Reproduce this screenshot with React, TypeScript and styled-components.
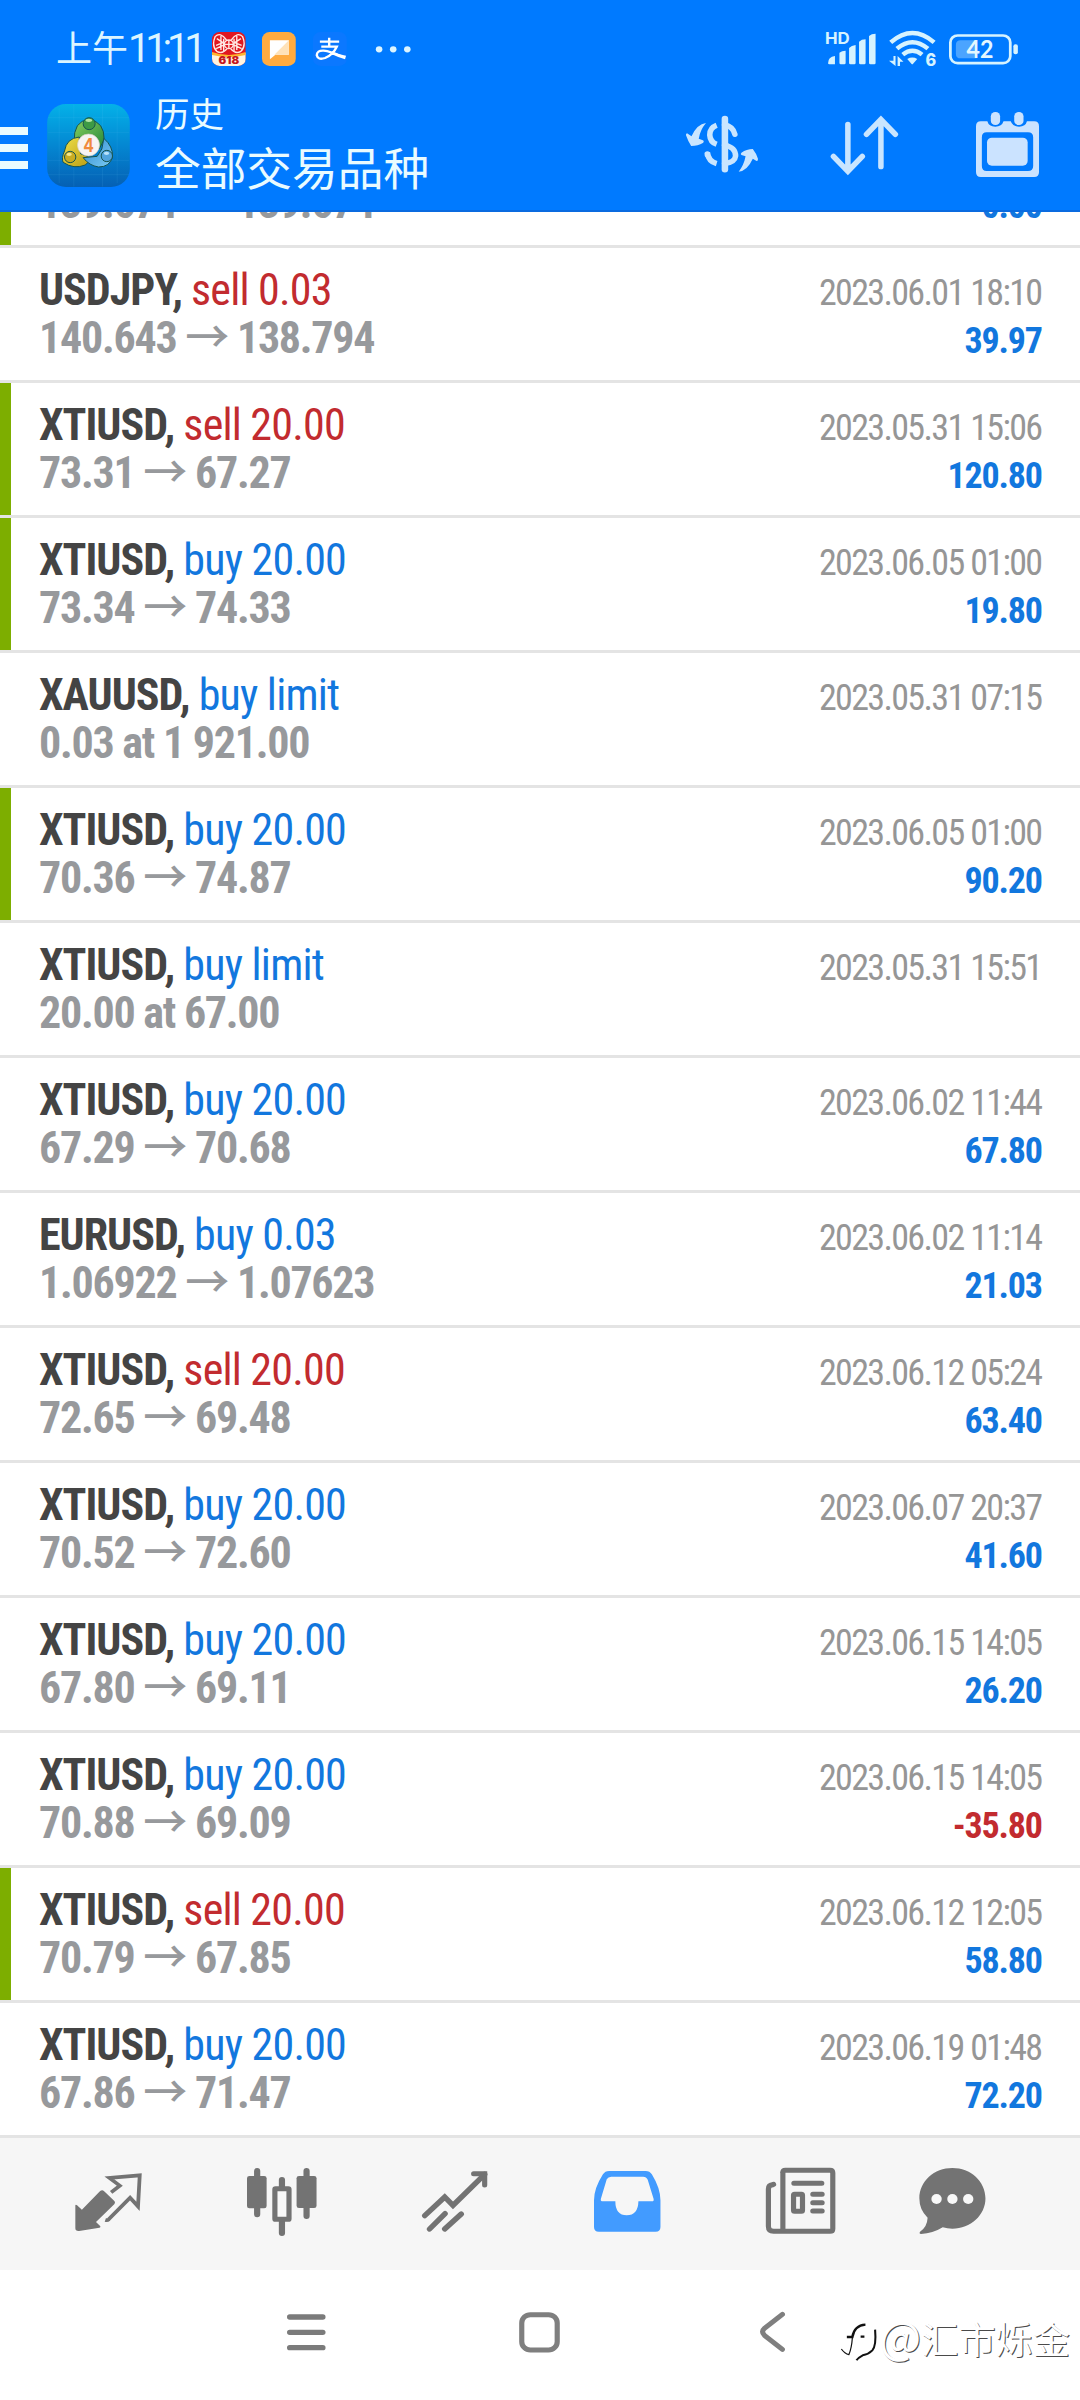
import React from "react";
import styled, { createGlobalStyle } from "styled-components";

const GlobalStyle = createGlobalStyle`
  * { box-sizing: border-box; }
  body { margin: 0; background: #fff; }
`;

const BLUE = "#1277de";
const RED = "#c22b2f";
const PALE = "#c9e5ff";
const GREY = "#737373";

const Screen = styled.div`
  width: 1080px;
  height: 2400px;
  display: flex;
  flex-direction: column;
  background: #fff;
  overflow: hidden;
  font-family: "Roboto Condensed", Roboto, "Noto Sans CJK SC", sans-serif;
`;

const Header = styled.header`
  flex: none;
  height: 212px;
  background: #007aff;
  border-bottom: 2px solid #0a6be0;
  color: #e9fbff;
  display: flex;
  flex-direction: column;
`;

const StatusBar = styled.div`
  height: 96px;
  padding: 2px 62px 0 56px;
  display: flex;
  align-items: center;
  justify-content: space-between;
`;

const StatusGroup = styled.div<{ $gap: number }>`
  display: flex;
  align-items: center;
  gap: ${(p) => p.$gap}px;
`;

const Clock = styled.span`
  width: 142px;
  margin-right: -2px;
  font: 400 36px/48px Roboto, "Noto Sans CJK SC", sans-serif;
  color: #dcf5ff;
  white-space: nowrap;
  display: flex;
  align-items: baseline;
`;

const ClockDigits = styled.span`
  font-size: 40px;
  letter-spacing: -5.2px;
  font-family: Roboto, sans-serif;
`;

const AppBar = styled.div`
  height: 114px;
  display: flex;
  align-items: flex-start;
`;

const Burger = styled.div`
  width: 28px;
  margin: 31px 19px 0 0;
  display: flex;
  flex-direction: column;
  gap: 9px;
`;

const BurgerLine = styled.i`
  height: 8px;
  background: #e9fbff;
`;

const LogoSlot = styled.div`
  margin-top: 8px;
  width: 83px;
  height: 83px;
`;

const Titles = styled.div`
  margin: -7px 0 0 25px;
  width: 400px;
  font-family: "Noto Sans CJK SC", sans-serif;
`;

const Subtitle = styled.div`
  font-size: 34.5px;
  line-height: 46px;
`;

const Title = styled.div`
  font-size: 45.7px;
  line-height: 62px;
`;

const Actions = styled.div`
  margin: 16px 41px 0 auto;
  display: flex;
  align-items: flex-start;
`;

const ActionSlot = styled.div<{ $left: number; $top: number }>`
  margin: ${(p) => p.$top}px 0 0 ${(p) => p.$left}px;
`;

const List = styled.main`
  flex: none;
  height: 1926px;
  display: flex;
  flex-direction: column;
  overflow: hidden;
`;

const Row = styled.div<{ $marked?: boolean }>`
  flex: none;
  height: 135px;
  display: flex;
  border-bottom: 3px solid #e4e4e4;
  background: linear-gradient(
    to right,
    ${(p) => (p.$marked ? "#7dae00" : "#fff")} 11px,
    #fff 11px
  );
  background-clip: padding-box;
`;

const ScrolledRow = styled(Row)`
  height: 36px;
  overflow: hidden;
`;

const RowBody = styled.div`
  flex: 1;
  padding: 18px 38px 0 39px;
`;

const ScrolledBody = styled.div`
  flex: 1;
  margin-top: -33px;
  padding: 0 38px 0 39px;
`;

const Line = styled.div`
  height: 48px;
  display: flex;
  justify-content: space-between;
  align-items: baseline;
  white-space: nowrap;
  line-height: 48px;
`;

const Deal = styled.span`
  font-size: 44px;
  letter-spacing: -1px;
`;

const Symbol = styled.b`
  color: #444;
  font-weight: 700;
`;

const Side = styled.span<{ $sell?: boolean }>`
  letter-spacing: -0.8px;
  color: ${(p) => (p.$sell ? RED : BLUE)};
`;

const Price = styled.span`
  font-size: 44px;
  font-weight: 700;
  letter-spacing: -1.26px;
  color: #97999c;
`;

const Arrow = styled.span`
  font-family: "Noto Sans", "Noto Sans CJK SC", sans-serif;
  font-weight: 500;
  line-height: 0;
`;

const DateText = styled.span`
  margin-right: 0.6px;
  font-size: 36px;
  letter-spacing: -1.65px;
  color: #969696;
`;

const Profit = styled.span<{ $loss?: boolean }>`
  margin-right: 0.2px;
  font-size: 36px;
  font-weight: 700;
  letter-spacing: -1.2px;
  color: ${(p) => (p.$loss ? RED : BLUE)};
`;

const Tabs = styled.nav`
  flex: none;
  height: 132px;
  background: #f6f6f6;
  padding-left: 22px;
  display: grid;
  grid-template-columns: repeat(5, 173px) 131px;
  align-items: start;
  justify-items: center;
`;

const TabSlot = styled.div<{ $top: number }>`
  margin-top: ${(p) => p.$top}px;
`;

const NavBar = styled.footer`
  position: relative;
  flex: 1;
  padding: 0 0 6px 287px;
  display: flex;
  align-items: center;
`;

const NavKey = styled.div<{ $gap: number }>`
  margin-left: ${(p) => p.$gap}px;
`;

const Watermark = styled.div`
  position: absolute;
  right: 10px;
  bottom: 37px;
  display: flex;
  align-items: center;
  gap: 2px;
  color: #fff;
  font: 400 37.2px/50px "Noto Sans CJK SC", sans-serif;
  text-shadow: 1px 1px 0 #4a4a4a;
  white-space: nowrap;
`;

const MarkSlot = styled.div`
  margin-top: 8px;
`;

const AtSign = styled.span`
  font-size: 44px;
  line-height: 0;
`;

const Svg = styled.svg`
  display: block;
  flex: none;
  overflow: visible;
`;

function Glyph({ box, children }: { box: [number, number, number, number]; children: React.ReactNode }) {
  return (
    <Svg viewBox={box.join(" ")} width={box[2] / 2.904} height={box[3] / 3} preserveAspectRatio="none">
      {children}
    </Svg>
  );
}

const PromoIcon = () => (
  <Glyph box={[616, 96, 98, 102]}>
    <defs>
      <clipPath id="promo"><rect x="616" y="96" width="98" height="102" rx="22" /></clipPath>
    </defs>
    <g clipPath="url(#promo)">
      <rect x="616" y="96" width="98" height="102" fill="#e01820" />
      <path d="M616 158Q665 176 714 158V198H616Z" fill="#fff4e0" />
      <path d="M616 156Q665 174 714 156V165Q665 178 616 165Z" fill="#ffb52e" />
      <g fill="none" stroke="#ffe9e4" strokeWidth="4">
        <path d="M658 120Q640 94 625 110Q614 138 630 154Q646 164 660 146M672 120Q690 94 705 110Q716 138 700 154Q684 164 670 146" />
        <path d="M630 116L648 128L628 136M642 108V150M650 116V154M700 116L682 128L702 136M688 108V150M680 116V154M628 146L648 136M702 146L682 136" />
        <circle cx="665" cy="133" r="13" />
        <path d="M665 120V146M652 133H678" />
      </g>
      <text x="665" y="192" textAnchor="middle" fontFamily="Inter, sans-serif" fontWeight="900" fontSize="32" textLength="60" lengthAdjust="spacingAndGlyphs" fill="#c5161d">618</text>
    </g>
  </Glyph>
);

const NoteIcon = () => (
  <Glyph box={[761, 96, 98, 102]}>
    <rect x="761" y="96" width="98" height="102" rx="22" fill="#ffab40" />
    <path d="M784 121H839V164H800L784 178Z" fill="#fff" />
    <path d="M839 121V164H797Z" fill="#ffe2b8" />
  </Glyph>
);

const PayIcon = () => (
  <Glyph box={[910, 96, 98, 102]}>
    <rect x="910" y="96" width="98" height="102" rx="22" fill="#0b78ff" />
    <g fill="none" stroke="#fff" strokeWidth="7">
      <path d="M930 125H986M957 113V140M934 140H979Q968 164 945 174Q924 181 921 166Q921 151 941 152Q960 154 990 168" />
    </g>
    <path d="M966 155Q988 164 1006 167L1003 178Q984 172 962 161Z" fill="#fff" />
  </Glyph>
);

const Dots = () => (
  <Glyph box={[1091, 137, 100, 20]}>
    {[1100, 1141, 1182].map((x) => <circle key={x} cx={x} cy="147" r="9.5" fill="#dcf5ff" />)}
  </Glyph>
);

const SignalIcon = () => (
  <Glyph box={[828, 98, 145, 104]}>
    <g fill="#d6f3ff">
      <text x="825" y="134" fontFamily="Inter, sans-serif" fontWeight="700" fontSize="48" textLength="72" lengthAdjust="spacingAndGlyphs">HD</text>
      <path d="M834 192Q834 172 854 170V195H838Q834 195 834 192ZM867 160Q874 154 885 154V191Q885 195 881 195H871Q867 195 867 191ZM895 146Q902 138 914 137V191Q914 195 910 195H899Q895 195 895 191ZM924 127Q931 120 943 120V191Q943 195 939 195H928Q924 195 924 191ZM953 110Q960 103 972 103V191Q972 195 968 195H957Q953 195 953 191Z" />
    </g>
  </Glyph>
);

const WifiIcon = () => (
  <Glyph box={[1009, 98, 136, 106]}>
    <g fill="none" stroke="#d6f3ff" strokeWidth="13">
      <path d="M1014 132Q1077 76 1140 132M1032 151Q1077 112 1122 151M1049 169Q1077 146 1105 169" />
    </g>
    <g fill="#d6f3ff">
      <path d="M1062 182Q1077 173 1091 182L1079 196Q1077 199 1074 196ZM1022 173H1028V203L1009 187H1022ZM1034 203V173L1051 190H1041V203Z" />
      <text x="1115" y="203" fontFamily="Inter, sans-serif" fontWeight="800" fontSize="51" textLength="31" lengthAdjust="spacingAndGlyphs">6</text>
    </g>
  </Glyph>
);

const BatteryIcon = () => (
  <Glyph box={[1188, 101, 200, 91]}>
    <rect x="1192" y="105.500" width="174" height="83" rx="21" fill="none" stroke="#d6f3ff" strokeWidth="8" />
    <path d="M1222 120H1268V174H1222Q1208 174 1208 160V134Q1208 120 1222 120Z" fill="#4ba4ff" />
    <rect x="1375" y="132" width="13" height="30" rx="6" fill="#d6f3ff" />
    <text x="1278" y="174" textAnchor="middle" fontFamily="Lato, sans-serif" fontWeight="700" fontSize="73" textLength="78" lengthAdjust="spacingAndGlyphs" fill="#e3f7ff">42</text>
  </Glyph>
);

const AppLogo = () => (
  <Svg viewBox="50 43 248 249" width="83" height="83">
    <defs>
      <linearGradient id="tile" x1="0" y1="0" x2="0" y2="1">
        <stop offset="0" stopColor="#04b1e8" />
        <stop offset="0.5" stopColor="#0487d2" />
        <stop offset="1" stopColor="#0560b4" />
      </linearGradient>
      <linearGradient id="green" x1="0" y1="0" x2="1" y2="1">
        <stop offset="0" stopColor="#8bd05f" /><stop offset="1" stopColor="#23873a" />
      </linearGradient>
      <linearGradient id="gold" x1="0" y1="0" x2="1" y2="1">
        <stop offset="0" stopColor="#efe04a" /><stop offset="1" stopColor="#b79a12" />
      </linearGradient>
      <linearGradient id="azure" x1="0" y1="0" x2="1" y2="1">
        <stop offset="0" stopColor="#2d86cd" /><stop offset="1" stopColor="#7ccdf5" />
      </linearGradient>
    </defs>
    <rect x="50" y="43" width="248" height="249" rx="56" fill="url(#tile)" />
    <path d="M86 56V280M130 44V291M216 44V291M260 56V280M52 84H296M52 128H296M52 212H296M52 255H296" stroke="#7fd4ff" strokeOpacity=".14" strokeWidth="2" />
    <g stroke="#17544f" strokeWidth="3">
      <path d="M131 158Q128 92 176 90Q222 96 221 150L206 178L176 140L142 144Z" fill="url(#green)" />
      <path d="M146 142Q108 146 102 184Q92 206 98 218Q130 240 164 226L186 206L150 192Z" fill="url(#gold)" />
      <path d="M220 146Q248 170 246 202Q238 232 204 232Q176 228 158 204L200 200L214 178Z" fill="url(#azure)" />
      <circle cx="176" cy="102" r="18" fill="#3d9a45" />
      <circle cx="119" cy="202" r="17" fill="#c9ac22" />
      <circle cx="229" cy="199" r="17" fill="#4fa3dd" />
    </g>
    <ellipse cx="175" cy="92" rx="10" ry="5" fill="#b8e6a4" />
    <ellipse cx="116" cy="194" rx="8" ry="5" fill="#f5e68c" />
    <ellipse cx="228" cy="191" rx="8" ry="5" fill="#b9e2fa" />
    <circle cx="174" cy="166" r="33" fill="#f8f4f2" stroke="#d6cfc4" strokeWidth="2" />
    <text x="174" y="186" textAnchor="middle" fontFamily="Inter, sans-serif" fontWeight="700" fontSize="55" textLength="32" lengthAdjust="spacingAndGlyphs" fill="#f08a3c">4</text>
  </Svg>
);

const CurrencyIcon = () => (
  <Glyph box={[424, 348, 210, 168]}>
    <g fill="none" stroke={PALE} strokeWidth="16">
      <path d="M513 376Q493 384 493 405Q494 426 513 433M486 457Q489 484 513 491" />
      <path d="M486 464V462M566 403Q561 380 536 374M536 435Q568 442 568 468Q566 487 536 491" strokeLinecap="round" />
      <path d="M537 357V508" strokeWidth="19" strokeLinecap="round" />
    </g>
    <path d="M482 369Q456 372 440 409L427 400Q423 401 424 406Q430 424 439 438Q459 438 473 429Q478 424 473 421L461 416Q465 390 482 369ZM577 515Q602 512 618 476L629 483Q634 483 633 476Q628 460 618 447Q600 447 585 458Q581 462 585 465L597 469Q592 496 577 515Z" fill={PALE} />
  </Glyph>
);

const SortIcon = () => (
  <Glyph box={[847, 348, 195, 177]}>
    <path d="M896 373V514M854 469L896 514L938 469M992 500V358M950 403L992 358L1034 403" fill="none" stroke={PALE} strokeWidth="16" strokeLinecap="round" strokeLinejoin="miter" />
  </Glyph>
);

const CalendarIcon = () => (
  <Glyph box={[1268, 338, 183, 196]}>
    <path fillRule="evenodd" fill="#cbe3ff" d="M1282 366H1301Q1305 382 1324 382Q1343 382 1348 366H1369Q1374 382 1393 382Q1412 382 1416 366H1437Q1451 366 1451 381V518Q1451 533 1437 533H1282Q1268 533 1268 518V381Q1268 366 1282 366ZM1299 399Q1285 399 1285 414V500Q1285 515 1299 515H1419Q1434 515 1434 500V414Q1434 399 1419 399Z" />
    <rect x="1300" y="415" width="118" height="84" rx="14" fill="#cbe3ff" />
    <rect x="1311" y="338" width="27" height="39" rx="13" fill="#cbe3ff" />
    <rect x="1379" y="338" width="27" height="39" rx="13" fill="#cbe3ff" />
  </Glyph>
);

const QuotesTab = () => (
  <Glyph box={[218, 159, 194, 175]}>
    <path d="M219 256Q220 252 224 256L238 269L291 213Q297 208 302 213L333 244Q336 248 332 253L279 306L291 318Q294 322 289 323L230 333Q219 334 219 325Z" fill={GREY} />
    <path d="M323 217L348 197L318 174L406 166L401 259L378 233L316 298Q312 302 306 300" fill="none" stroke={GREY} strokeWidth="11" />
  </Glyph>
);

const ChartTab = () => (
  <Glyph box={[715, 144, 203, 205]}>
    <path d="M744.500 153V283M888 153V288M816.500 180V205M816.500 300V339" stroke={GREY} strokeWidth="18" strokeLinecap="round" />
    <rect x="715" y="168" width="57" height="97" rx="7" fill={GREY} />
    <rect x="859" y="168" width="58" height="96" rx="7" fill={GREY} />
    <rect x="796" y="206" width="41" height="92" rx="2" fill="#f8f8f8" stroke={GREY} strokeWidth="15" />
  </Glyph>
);

const TrendTab = () => (
  <Glyph box={[1223, 152, 191, 182]}>
    <g fill="none" stroke={GREY} strokeLinecap="round">
      <path d="M1231 286L1289 230L1313 255L1405 162" strokeWidth="16" />
      <path d="M1373 160H1405V194" strokeWidth="15" />
      <path d="M1245 326L1290 280M1289 326L1337 281" strokeWidth="16" />
    </g>
  </Glyph>
);

const TradeTab = () => (
  <Glyph box={[158, 152, 193, 183]}>
    <path fillRule="evenodd" fill="#429bff" d="M202 152H308Q320 152 326 162Q351 204 351 240V320Q351 334 337 334H172Q158 334 158 320V240Q158 204 184 162Q190 152 202 152ZM208 169Q199 169 195 177L178 235Q176 243 184 243H220Q220 285 253 285Q286 285 287 243H326Q333 243 331 235L314 178Q310 169 301 169Z" />
  </Glyph>
);

const NewsTab = () => (
  <Glyph box={[657, 144, 202, 198]}>
    <g fill="none" stroke={GREY} strokeWidth="15">
      <path d="M706 158Q706 151 713 151H843Q851 151 851 159V326Q851 334 843 334H679Q664 334 664 319V207Q664 194 677 194" />
      <path d="M677 194L679 193" strokeLinecap="round" />
      <path d="M706 155V334" />
      <path d="M738 190H819M793 223H820M793 248H820M793 273H820" strokeLinecap="round" />
      <rect x="737" y="223" width="26" height="51" rx="3" />
    </g>
  </Glyph>
);

const ChatTab = () => (
  <Glyph box={[1102, 144, 193, 198]}>
    <path d="M1199 144C1252 144 1295 184 1295 235C1295 286 1252 326 1199 326Q1184 326 1171 322Q1143 340 1108 342Q1101 341 1105 335Q1126 320 1127 293Q1103 270 1103 235C1103 184 1146 144 1199 144Z" fill={GREY} />
    {[1153, 1199, 1245].map((x) => <circle key={x} cx={x} cy="237" r="15" fill="#f8f8f8" />)}
  </Glyph>
);

const RecentsKey = () => (
  <Glyph box={[833, 581, 112, 110]}>
    <path d="M841 590H937M841 636H937M841 682H937" stroke="#7b7b7b" strokeWidth="16" strokeLinecap="round" />
  </Glyph>
);

const HomeKey = () => (
  <Glyph box={[1506, 574, 119, 121]}>
    <rect x="1514" y="582" width="103" height="106" rx="25" fill="none" stroke="#7f7f7f" strokeWidth="15" />
  </Glyph>
);

const BackKey = () => (
  <Glyph box={[639, 576, 73, 120]}>
    <path d="M704 583L652 625Q641 635 652 646L704 688" fill="none" stroke="#7f7f7f" strokeWidth="15" strokeLinecap="round" />
  </Glyph>
);

const BrandMark = () => (
  <Glyph box={[875, 618, 105, 114]}>
    <g fill="none" stroke="#111">
      <path d="M892 660H908Q914 625 946 623M932 659H943" strokeWidth="7" />
      <path d="M908 662Q906 692 898 713Q886 710 876 696" strokeWidth="3.500" />
      <path d="M974 638Q978 686 966 700Q954 712 938 715Q925 722 920 730" strokeWidth="6" />
    </g>
  </Glyph>
);

type Item = {
  symbol: string;
  side: string;
  date: string;
  from?: string;
  to?: string;
  pending?: string;
  profit?: string;
  marked?: boolean;
};

const ITEMS: Item[] = [
  { symbol: "USDJPY", side: "sell 0.03", date: "2023.06.01 18:10", from: "140.643", to: "138.794", profit: "39.97" },
  { symbol: "XTIUSD", side: "sell 20.00", date: "2023.05.31 15:06", from: "73.31", to: "67.27", profit: "120.80", marked: true },
  { symbol: "XTIUSD", side: "buy 20.00", date: "2023.06.05 01:00", from: "73.34", to: "74.33", profit: "19.80", marked: true },
  { symbol: "XAUUSD", side: "buy limit", date: "2023.05.31 07:15", pending: "0.03 at 1 921.00" },
  { symbol: "XTIUSD", side: "buy 20.00", date: "2023.06.05 01:00", from: "70.36", to: "74.87", profit: "90.20", marked: true },
  { symbol: "XTIUSD", side: "buy limit", date: "2023.05.31 15:51", pending: "20.00 at 67.00" },
  { symbol: "XTIUSD", side: "buy 20.00", date: "2023.06.02 11:44", from: "67.29", to: "70.68", profit: "67.80" },
  { symbol: "EURUSD", side: "buy 0.03", date: "2023.06.02 11:14", from: "1.06922", to: "1.07623", profit: "21.03" },
  { symbol: "XTIUSD", side: "sell 20.00", date: "2023.06.12 05:24", from: "72.65", to: "69.48", profit: "63.40" },
  { symbol: "XTIUSD", side: "buy 20.00", date: "2023.06.07 20:37", from: "70.52", to: "72.60", profit: "41.60" },
  { symbol: "XTIUSD", side: "buy 20.00", date: "2023.06.15 14:05", from: "67.80", to: "69.11", profit: "26.20" },
  { symbol: "XTIUSD", side: "buy 20.00", date: "2023.06.15 14:05", from: "70.88", to: "69.09", profit: "-35.80" },
  { symbol: "XTIUSD", side: "sell 20.00", date: "2023.06.12 12:05", from: "70.79", to: "67.85", profit: "58.80", marked: true },
  { symbol: "XTIUSD", side: "buy 20.00", date: "2023.06.19 01:48", from: "67.86", to: "71.47", profit: "72.20" },
];

function PriceLine({ from, to, pending, profit }: Pick<Item, "from" | "to" | "pending" | "profit">) {
  return (
    <Line>
      <Price>{pending ?? (<>{from} <Arrow>→</Arrow> {to}</>)}</Price>
      {profit && <Profit $loss={profit.startsWith("-")}>{profit}</Profit>}
    </Line>
  );
}

function HistoryRow({ item }: { item: Item }) {
  return (
    <Row $marked={item.marked}>
      <RowBody>
        <Line>
          <Deal>
            <Symbol>{item.symbol},</Symbol> <Side $sell={item.side.startsWith("sell")}>{item.side}</Side>
          </Deal>
          <DateText>{item.date}</DateText>
        </Line>
        <PriceLine from={item.from} to={item.to} pending={item.pending} profit={item.profit} />
      </RowBody>
    </Row>
  );
}

export default function App() {
  return (
    <Screen>
      <GlobalStyle />
      <Header>
        <StatusBar>
          <StatusGroup $gap={16}>
            <Clock>上午<ClockDigits>11:11</ClockDigits></Clock>
            <PromoIcon />
            <NoteIcon />
            <ActionSlot $left={2} $top={0}><PayIcon /></ActionSlot>
            <ActionSlot $left={13} $top={0}><Dots /></ActionSlot>
          </StatusGroup>
          <StatusGroup $gap={13}>
            <SignalIcon />
            <WifiIcon />
            <BatteryIcon />
          </StatusGroup>
        </StatusBar>
        <AppBar>
          <Burger><BurgerLine /><BurgerLine /><BurgerLine /></Burger>
          <LogoSlot><AppLogo /></LogoSlot>
          <Titles>
            <Subtitle>历史</Subtitle>
            <Title>全部交易品种</Title>
          </Titles>
          <Actions>
            <ActionSlot $left={0} $top={4}><CurrencyIcon /></ActionSlot>
            <ActionSlot $left={73} $top={4}><SortIcon /></ActionSlot>
            <ActionSlot $left={78} $top={0}><CalendarIcon /></ActionSlot>
          </Actions>
        </AppBar>
      </Header>
      <List>
        <ScrolledRow $marked>
          <ScrolledBody>
            <PriceLine from="139.674" to="139.674" profit="0.00" />
          </ScrolledBody>
        </ScrolledRow>
        {ITEMS.map((item, i) => <HistoryRow key={i} item={item} />)}
      </List>
      <Tabs>
        <TabSlot $top={35}><QuotesTab /></TabSlot>
        <TabSlot $top={30}><ChartTab /></TabSlot>
        <TabSlot $top={33}><TrendTab /></TabSlot>
        <TabSlot $top={33}><TradeTab /></TabSlot>
        <TabSlot $top={30}><NewsTab /></TabSlot>
        <TabSlot $top={30}><ChatTab /></TabSlot>
      </Tabs>
      <NavBar>
        <RecentsKey />
        <NavKey $gap={193}><HomeKey /></NavKey>
        <NavKey $gap={200}><BackKey /></NavKey>
        <Watermark>
          <MarkSlot><BrandMark /></MarkSlot>
          <span><AtSign>@</AtSign>汇市烁金</span>
        </Watermark>
      </NavBar>
    </Screen>
  );
}
